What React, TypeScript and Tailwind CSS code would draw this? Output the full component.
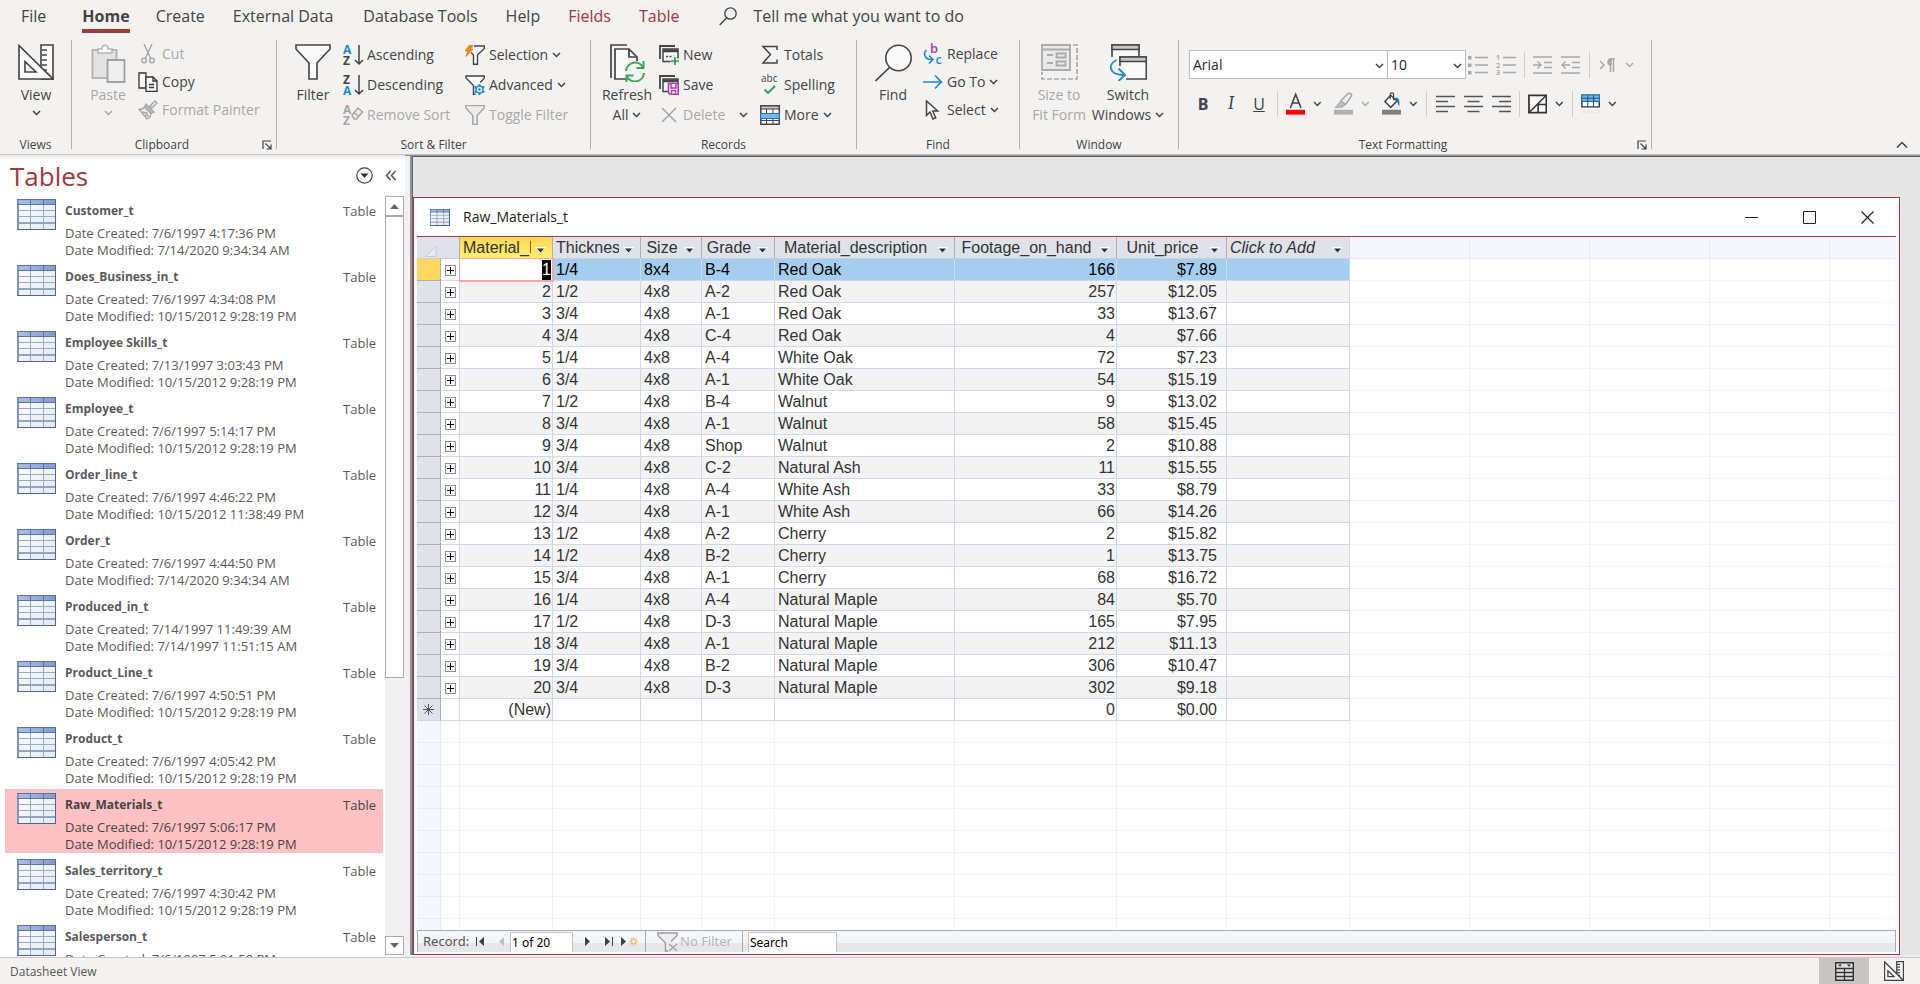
import type { ReactNode } from "react";

type NavItem = { name: string; created: string; modified: string; selected?: boolean };

const NAV_ITEMS: NavItem[] = [
  { name: "Customer_t", created: "7/6/1997 4:17:36 PM", modified: "7/14/2020 9:34:34 AM" },
  { name: "Does_Business_in_t", created: "7/6/1997 4:34:08 PM", modified: "10/15/2012 9:28:19 PM" },
  { name: "Employee Skills_t", created: "7/13/1997 3:03:43 PM", modified: "10/15/2012 9:28:19 PM" },
  { name: "Employee_t", created: "7/6/1997 5:14:17 PM", modified: "10/15/2012 9:28:19 PM" },
  { name: "Order_line_t", created: "7/6/1997 4:46:22 PM", modified: "10/15/2012 11:38:49 PM" },
  { name: "Order_t", created: "7/6/1997 4:44:50 PM", modified: "7/14/2020 9:34:34 AM" },
  { name: "Produced_in_t", created: "7/14/1997 11:49:39 AM", modified: "7/14/1997 11:51:15 AM" },
  { name: "Product_Line_t", created: "7/6/1997 4:50:51 PM", modified: "10/15/2012 9:28:19 PM" },
  { name: "Product_t", created: "7/6/1997 4:05:42 PM", modified: "10/15/2012 9:28:19 PM" },
  { name: "Raw_Materials_t", created: "7/6/1997 5:06:17 PM", modified: "10/15/2012 9:28:19 PM", selected: true },
  { name: "Sales_territory_t", created: "7/6/1997 4:30:42 PM", modified: "10/15/2012 9:28:19 PM" },
  { name: "Salesperson_t", created: "7/6/1997 5:01:58 PM", modified: "10/15/2012 9:28:19 PM" },
];

const MATERIALS: string[][] = [
  ["1", "1/4", "8x4", "B-4", "Red Oak", "166", "$7.89"],
  ["2", "1/2", "4x8", "A-2", "Red Oak", "257", "$12.05"],
  ["3", "3/4", "4x8", "A-1", "Red Oak", "33", "$13.67"],
  ["4", "3/4", "4x8", "C-4", "Red Oak", "4", "$7.66"],
  ["5", "1/4", "4x8", "A-4", "White Oak", "72", "$7.23"],
  ["6", "3/4", "4x8", "A-1", "White Oak", "54", "$15.19"],
  ["7", "1/2", "4x8", "B-4", "Walnut", "9", "$13.02"],
  ["8", "3/4", "4x8", "A-1", "Walnut", "58", "$15.45"],
  ["9", "3/4", "4x8", "Shop", "Walnut", "2", "$10.88"],
  ["10", "3/4", "4x8", "C-2", "Natural Ash", "11", "$15.55"],
  ["11", "1/4", "4x8", "A-4", "White Ash", "33", "$8.79"],
  ["12", "3/4", "4x8", "A-1", "White Ash", "66", "$14.26"],
  ["13", "1/2", "4x8", "A-2", "Cherry", "2", "$15.82"],
  ["14", "1/2", "4x8", "B-2", "Cherry", "1", "$13.75"],
  ["15", "3/4", "4x8", "A-1", "Cherry", "68", "$16.72"],
  ["16", "1/4", "4x8", "A-4", "Natural Maple", "84", "$5.70"],
  ["17", "1/2", "4x8", "D-3", "Natural Maple", "165", "$7.95"],
  ["18", "3/4", "4x8", "A-1", "Natural Maple", "212", "$11.13"],
  ["19", "3/4", "4x8", "B-2", "Natural Maple", "306", "$10.47"],
  ["20", "3/4", "4x8", "D-3", "Natural Maple", "302", "$9.18"],
];

const COLUMNS = ["Material_ID", "Thickness", "Size", "Grade", "Material_description", "Footage_on_hand", "Unit_price"];

const CELL_ALIGN = [
  "text-right pr-px",
  "text-left pl-[3px]",
  "text-left pl-[3px]",
  "text-left pl-[3px]",
  "text-left pl-[3px]",
  "text-right pr-px",
  "text-right pr-[9px]",
];

const INK = "#444444";
const FADED = "#a8a8a8";

/* ---------- Icons ---------- */

function Chevron({ className = "" }: { className?: string }) {
  return (
    <svg width="9" height="6" viewBox="0 0 9 6" className={className} aria-hidden="true">
      <path d="M1 1l3.5 3.5L8 1" fill="none" stroke="currentColor" strokeWidth="1.5" />
    </svg>
  );
}

function DesignIcon({ size }: { size: number }) {
  return (
    <svg width={size} height={size} viewBox="0 0 36 36" aria-hidden="true">
      <g fill="#fafafa" stroke={INK} strokeWidth={size > 30 ? 1.6 : 2.4}>
        <path d="M23 1h12v34H23z" />
        <path d="M1 1.5V35h34z" />
        <path d="M7 17.5V28h11z" />
        <path d="M24 6h5M24 11h5M24 16h5M24 21h5M26 26h3" />
      </g>
    </svg>
  );
}

function PasteIcon() {
  return (
    <svg width="36" height="39" viewBox="0 0 36 39" aria-hidden="true">
      <path d="M2.500 6h24v28h-24z" fill="#e4e3e2" stroke="#b5b5b5" strokeWidth="2" />
      <path d="M8 9V5h4c0-5 6-5 6 0h4v4z" fill="#fafafa" stroke="#b5b5b5" strokeWidth="1.500" />
      <path d="M17.500 16h17v22h-17z" fill="#efefef" stroke="#a0a0a0" strokeWidth="1.800" />
    </svg>
  );
}

function CutIcon() {
  return (
    <svg width="20" height="20" viewBox="0 0 20 20" fill="none" stroke="#a0a0a0" strokeWidth="1.300" aria-hidden="true">
      <path d="M6 0l6.500 14M14 0L7.500 14" />
      <circle cx="6" cy="16.500" r="2.300" />
      <circle cx="14" cy="16.500" r="2.300" />
    </svg>
  );
}

function CopyIcon() {
  return (
    <svg width="20" height="20" viewBox="0 0 20 20" fill="#fafafa" stroke="#333" strokeWidth="1.300" aria-hidden="true">
      <path d="M1 1h7v15H1z" />
      <path d="M8 5h7l4 4v10.300H8z" />
      <path d="M15 5v4h4M11 12.500h5M11 15.500h5" fill="none" />
    </svg>
  );
}

function PainterIcon() {
  return (
    <svg width="20" height="20" viewBox="0 0 20 20" fill="#ececec" stroke="#a5a5a5" strokeWidth="1.300" aria-hidden="true">
      <path d="M12 6l5-5 2 2-5 5z" />
      <path d="M8 4l8 8-3 1.500L6.500 7z" fill="#bdbdbd" />
      <path d="M6.500 7C5 9 3 9.500 1 9.500L9 19c3-1.500 4-3.500 4-5.500z" />
      <path d="M4 12l6 1.500M7 15l4 1" />
    </svg>
  );
}

function Funnel({ size, color = INK, fill = "#fafafa" }: { size: number; color?: string; fill?: string }) {
  return (
    <svg width={size} height={size} viewBox="0 0 36 36" aria-hidden="true">
      <path d="M1 1h34v4L22 19v16h-8V19L1 5z" fill={fill} stroke={color} strokeWidth={size > 30 ? 1.6 : 2.8} />
    </svg>
  );
}

function SortIcon({ top, bottom, topColor, bottomColor }: { top: string; bottom: string; topColor: string; bottomColor: string }) {
  return (
    <svg width="20" height="22" viewBox="0 0 20 22" className="overflow-visible" aria-hidden="true">
      <g fontFamily="Open Sans" fontWeight="700" fontSize="12">
        <text x="0" y="10" fill={topColor}>{top}</text>
        <text x="0" y="21" fill={bottomColor}>{bottom}</text>
      </g>
      <path d="M16 1v19M12 16l4 4 4-4" fill="none" stroke={INK} strokeWidth="1.500" />
    </svg>
  );
}

function RemoveSortIcon() {
  return (
    <svg width="20" height="22" viewBox="0 0 20 22" className="overflow-visible" aria-hidden="true">
      <g fontFamily="Open Sans" fontWeight="700" fontSize="12" fill="#a5a5a5">
        <text x="0" y="10">A</text>
        <text x="0" y="21">Z</text>
      </g>
      <path d="M9 11l6-7 4.500 4-6 7h-2.500z" fill="#ececec" stroke="#a5a5a5" strokeWidth="1.500" />
      <path d="M11 8.500l5 4" stroke="#a5a5a5" strokeWidth="1.500" />
    </svg>
  );
}

function SelectionIcon() {
  return (
    <svg width="20" height="20" viewBox="0 0 20 20" aria-hidden="true">
      <path d="M9 1h10.300v2.500L12.500 10v9.300h-4V10L6 7.500" fill="#fafafa" stroke={INK} strokeWidth="1.400" />
      <path d="M4.500 0L0 6h2.500L1 11.500 8 4H5.500L8 0z" fill="#f08a24" stroke="#d9730d" strokeWidth=".7" />
    </svg>
  );
}

function AdvancedIcon() {
  return (
    <svg width="20" height="20" viewBox="0 0 20 20" aria-hidden="true">
      <path d="M10.500 19.300H8.500V10.500L1 3V1h18.300v2l-4 4.500" fill="#fafafa" stroke={INK} strokeWidth="1.400" />
      <circle cx="14.500" cy="14.500" r="3.600" fill="#dbeefb" stroke="#1e8bcd" strokeWidth="1.500" />
      <circle cx="14.500" cy="14.500" r="1.200" fill="#1e8bcd" />
      <path d="M14.500 9v2M14.500 18v2M9.700 11.700l1.800 1M17.500 16.300l1.800 1M9.700 17.300l1.800-1M17.500 12.700l1.800-1" stroke="#1e8bcd" strokeWidth="1.900" />
    </svg>
  );
}

function RefreshIcon() {
  return (
    <svg width="36" height="38" viewBox="0 0 36 38" fill="none" aria-hidden="true">
      <path d="M18 1H2v33" stroke={INK} strokeWidth="1.700" />
      <path d="M20 35H6V5h14l8 8v4" fill="#fafafa" stroke={INK} strokeWidth="1.700" />
      <path d="M20 5v8h8" stroke={INK} strokeWidth="1.700" />
      <circle cx="26" cy="28" r="10.500" fill="#f3f2f1" />
      <path d="M17 27a9 9 0 0 1 17-3.500M35 29a9 9 0 0 1-17 3.500" stroke="#3fa45b" strokeWidth="2" />
      <path d="M34.500 17v7h-7M17.500 38v-6.500h7" stroke="#3fa45b" strokeWidth="2" />
    </svg>
  );
}

function FormStackIcon({ kind }: { kind: "new" | "save" }) {
  return (
    <svg width="20" height="20" viewBox="0 0 20 20" fill="none" aria-hidden="true">
      <path d="M1 14V1h15" stroke={INK} strokeWidth="1.800" />
      <path d="M4 4h15v12.500H4z" fill="#fafafa" stroke={INK} strokeWidth="1.500" />
      <path d="M4 5.800h15" stroke={INK} strokeWidth="3" />
      {kind === "new" ? (
        <>
          <path d="M7 11.500h2M10.500 11.500h2M14 11.500h2" stroke={INK} strokeWidth="1.300" />
          <path d="M16 11v9M11.500 15.500h9" stroke="#f3f2f1" strokeWidth="4" />
          <path d="M16 12v8M12 16h8" stroke="#2f9e52" strokeWidth="1.700" />
        </>
      ) : (
        <>
          <path d="M9.500 8.500h9.700v10.700h-8.200l-1.500-1.500z" fill="#fafafa" stroke="#a63fb3" strokeWidth="1.600" />
          <path d="M12 9v4h5V9M12.500 19v-3.500h4V19" stroke="#a63fb3" strokeWidth="1.500" />
        </>
      )}
    </svg>
  );
}

function DeleteIcon() {
  return (
    <svg width="20" height="20" viewBox="0 0 20 20" aria-hidden="true">
      <path d="M3 3l14 14M17 3L3 17" stroke="#a5a5a5" strokeWidth="1.500" />
    </svg>
  );
}

function SigmaIcon() {
  return (
    <svg width="20" height="20" viewBox="0 0 20 20" aria-hidden="true">
      <path d="M17 5V1.500H3L10.500 9.500 3 18h14v-3.500" fill="none" stroke={INK} strokeWidth="1.500" />
    </svg>
  );
}

function SpellingIcon() {
  return (
    <svg width="20" height="22" viewBox="0 0 20 22" className="overflow-visible" aria-hidden="true">
      <text x="1" y="8" fontFamily="Open Sans" fontSize="10" fill={INK}>abc</text>
      <path d="M4.500 15.500l3.500 3.500 7-7" fill="none" stroke="#2f9e52" strokeWidth="1.800" />
    </svg>
  );
}

function MoreIcon() {
  return (
    <svg width="20" height="20" viewBox="0 0 20 20" aria-hidden="true">
      <path d="M.8.800h18.400v18.400H.8z" fill="#fafafa" stroke={INK} strokeWidth="1.500" />
      <path d="M1 1h18v3H1z" fill="#c8c6c4" stroke={INK} />
      <path d="M6.500 4v15M13 4v15M1 15.500h18" stroke={INK} />
      <path d="M.5 8.500h19v5H.5z" fill="#77b8ea" stroke="#1976c5" strokeWidth="1.200" />
    </svg>
  );
}

function FindIcon() {
  return (
    <svg width="37" height="38" viewBox="0 0 37 38" aria-hidden="true">
      <circle cx="23.500" cy="14" r="12.700" fill="#fafafa" stroke={INK} strokeWidth="1.600" />
      <path d="M14.500 23.500L.5 37" stroke={INK} strokeWidth="1.700" />
    </svg>
  );
}

function ReplaceIcon() {
  return (
    <svg width="20" height="22" viewBox="0 0 20 22" className="overflow-visible" aria-hidden="true">
      <g fontFamily="Open Sans" fontWeight="600" fontSize="13">
        <text x="7" y="10" fill="#a63fb3">b</text>
        <text x="12.500" y="21" fill="#1e8bcd">c</text>
      </g>
      <path d="M3.500 7C0 10 1 17 9 16.500M6 12.500l4 4-4 4" fill="none" stroke="#1e8bcd" strokeWidth="1.600" />
    </svg>
  );
}

function GoToIcon() {
  return (
    <svg width="20" height="20" viewBox="0 0 20 20" aria-hidden="true">
      <path d="M0 10h18M12 3.500l6.500 6.500-6.500 6.500" fill="none" stroke="#1e8bcd" strokeWidth="1.600" />
    </svg>
  );
}

function PointerIcon() {
  return (
    <svg width="20" height="20" viewBox="0 0 20 20" aria-hidden="true">
      <path d="M3.500 1v14.500l3.500-3.500 3 7 2.700-1.200-3-6.800h5z" fill="#fafafa" stroke={INK} strokeWidth="1.500" />
    </svg>
  );
}

function SizeToFitIcon() {
  return (
    <svg width="37" height="36" viewBox="0 0 37 36" fill="none" stroke="#ababab" aria-hidden="true">
      <path d="M1 1h28v25H1z" fill="#e9e9e9" strokeWidth="1.800" />
      <path d="M1 5.500h28" strokeWidth="2" />
      <path d="M6 11h6M6 19h6" strokeWidth="1.800" />
      <path d="M15.500 9.500h9v4h-9zM15.500 17.500h9v4h-9z" strokeWidth="1.800" />
      <path d="M32 1h4v34H1v-7" strokeWidth="1.700" strokeDasharray="5 2" />
    </svg>
  );
}

function SwitchIcon() {
  return (
    <svg width="38" height="37" viewBox="0 0 38 37" fill="none" aria-hidden="true">
      <path d="M3 13V1h27v11" fill="#fafafa" stroke={INK} strokeWidth="1.600" />
      <path d="M3 1h27v4.500H3z" fill="#c8c6c4" stroke={INK} strokeWidth="1.500" />
      <path d="M11 13h27v22H11z" fill="#fafafa" />
      <path d="M11 22v-9h26.300v22H17" stroke={INK} strokeWidth="1.600" />
      <path d="M11 13h26.300v4.500H11z" fill="#c8c6c4" stroke={INK} strokeWidth="1.500" />
      <path d="M7.500 16C-1 20-1 31 15 31M9.500 24.500l6.500 6.500-6.500 6" stroke="#1e8bcd" strokeWidth="1.900" />
    </svg>
  );
}

function ListIcon({ numbered = false }: { numbered?: boolean }) {
  return (
    <svg width="20" height="20" viewBox="0 0 20 20" className="overflow-visible" aria-hidden="true">
      <path d="M7 2.500h13M7 10h13M7 17.500h13" stroke="#a8a8a8" strokeWidth="1.700" />
      {numbered ? (
        <g fontFamily="Open Sans" fontWeight="700" fontSize="7" fill="#a8a8a8">
          <text x="0" y="5">1</text>
          <text x="0" y="12.500">2</text>
          <text x="0" y="20">3</text>
        </g>
      ) : (
        <path d="M0 1h3.500v3.500H0zM0 8.500h3.500V12H0zM0 16h3.500v3.500H0z" fill="#a8a8a8" />
      )}
    </svg>
  );
}

function IndentIcon({ out = false }: { out?: boolean }) {
  return (
    <svg width="20" height="20" viewBox="0 0 20 20" fill="none" stroke="#a8a8a8" strokeWidth="1.700" aria-hidden="true">
      <path d="M0 2h19M11 7.500h8M11 12.500h8M0 18h19" />
      <path d={out ? "M9 10H1M4.500 6.500L1 10l3.500 3.500" : "M0 10h8M4.500 6.500L8 10l-3.500 3.500"} strokeWidth="1.400" />
    </svg>
  );
}

function AlignIcon({ align }: { align: "left" | "center" | "right" }) {
  const d = {
    left: "M0 2.500h19M0 7.500h12M0 12.500h19M0 17.500h12",
    center: "M0 2.500h19M3.500 7.500h12M0 12.500h19M3.500 17.500h12",
    right: "M0 2.500h19M7 7.500h12M0 12.500h19M7 17.500h12",
  }[align];
  return (
    <svg width="19" height="20" viewBox="0 0 19 20" aria-hidden="true">
      <path d={d} stroke="#555" strokeWidth="1.500" />
    </svg>
  );
}

function FontColorIcon() {
  return (
    <svg width="20" height="24" viewBox="0 0 20 24" aria-hidden="true">
      <path d="M4.500 16L10 2l5.500 14M6.500 11h7" fill="none" stroke={INK} strokeWidth="1.600" />
      <path d="M0 18h20v5H0z" fill="#ff0000" />
    </svg>
  );
}

function HighlightIcon() {
  return (
    <svg width="20" height="24" viewBox="0 0 20 24" aria-hidden="true">
      <path d="M7 9l7-7.500c2-1.500 5 0 4 2.500l-6 8.500z" fill="#ececec" stroke="#a5a5a5" strokeWidth="1.500" />
      <path d="M7 9l5 3.500-3 2.500-8 1z" fill="#bdbdbd" stroke="#a5a5a5" />
      <path d="M0 18h20v5H0z" fill="#b0b0b0" />
    </svg>
  );
}

function FillIcon() {
  return (
    <svg width="20" height="24" viewBox="0 0 20 24" aria-hidden="true">
      <path d="M9 3l6.500 6L9 15.500 3 9.500z" fill="#fafafa" stroke={INK} strokeWidth="1.500" />
      <path d="M8.500 7V2c0-2 3.500-2 3.500 0v6" fill="none" stroke={INK} strokeWidth="1.200" />
      <path d="M14 5c3.500.500 4.500 3 4 9-2-1-1-5-4-6z" fill="#1976c5" />
      <path d="M0 18h20v5H0z" fill="#808080" />
    </svg>
  );
}

function GridlinesIcon() {
  return (
    <svg width="20" height="20" viewBox="0 0 20 20" aria-hidden="true">
      <path d="M1 1h18v18H1z" fill="#fafafa" stroke="#333" strokeWidth="1.800" />
      <path d="M1 19L19 1M10 10.500h9M10.500 10v9" stroke="#333" strokeWidth="1.600" />
    </svg>
  );
}

function AltRowIcon() {
  return (
    <svg width="20" height="20" viewBox="0 0 20 20" aria-hidden="true">
      <path d="M1 1h18v12H1z" fill="#fafafa" stroke="#333" strokeWidth="1.500" />
      <path d="M.7.700h18.600v6.500H.7z" fill="#77b8ea" stroke="#1976c5" strokeWidth="1.200" />
      <path d="M7 1v12M13 1v12M1 4h18" stroke="#1d4e7a" />
      <path d="M0 16h20v4H0z" fill="#ebebeb" />
    </svg>
  );
}

function TableIcon({ large = false }: { large?: boolean }) {
  return (
    <svg width={large ? 39 : 20} height={large ? 31 : 17} viewBox="0 0 39 31" preserveAspectRatio="none" aria-hidden="true" className="shrink-0">
      <defs>
        <linearGradient id="sheet" x1="0" y1="0" x2="1" y2="1">
          <stop offset="0" stopColor="#ffffff" />
          <stop offset="1" stopColor="#dfe8f5" />
        </linearGradient>
        <linearGradient id="sheetHead" x1="0" y1="0" x2="1" y2="0">
          <stop offset="0" stopColor="#b0c0e2" />
          <stop offset="1" stopColor="#8499cc" />
        </linearGradient>
      </defs>
      <path d="M0 0h39v31H0z" fill="url(#sheet)" />
      <path d="M0 0h39v5H0z" fill="url(#sheetHead)" />
      <path d="M1 11.500h38M1 17.500h38M13.500 5v26M26.500 5v26" stroke="#9cabc3" strokeWidth={large ? 1 : 1.8} />
      <path d="M1 24h38" stroke="#93a4bf" strokeWidth="2" />
      <path d="M1 0v31" stroke="#7f96c2" strokeWidth="2" />
      <path d="M0 .500h39M0 5.500h39M13.500 0v5M26.500 0v5" stroke="#5874b3" strokeWidth={large ? 1 : 2} />
      <path d="M38.500 0v31M0 30.500h39" stroke="#4f6790" strokeWidth={large ? 1 : 3} />
    </svg>
  );
}

function LauncherIcon() {
  return (
    <svg width="10" height="10" viewBox="0 0 10 10" fill="none" stroke={INK} strokeWidth="1.200" aria-hidden="true">
      <path d="M1 9V1h8M3.500 3.500l5 5M9 4.500V9H4.500" />
    </svg>
  );
}

/* ---------- Ribbon building blocks ---------- */

function Group({ label, launcher = false, className, children }: { label: string; launcher?: boolean; className: string; children: ReactNode }) {
  return (
    <section aria-label={label} className={`flex h-[109px] shrink-0 flex-col justify-between border-r border-[#b3b1af] ${className}`}>
      <div className="flex items-start">{children}</div>
      <div className="flex h-2 items-center text-xs leading-2">
        <span className="flex-1 text-center">{label}</span>
        {launcher && (
          <button type="button" aria-label={`${label} settings`} className="mr-1 flex w-5 justify-end">
            <LauncherIcon />
          </button>
        )}
      </div>
    </section>
  );
}

function BigButton({ icon, lines, chevron, disabled, className }: { icon: ReactNode; lines: string[]; chevron?: boolean; disabled?: boolean; className: string }) {
  return (
    <button type="button" disabled={disabled} className={`flex flex-col items-center pt-1 leading-5 ${disabled ? "text-[#a8a8a8]" : ""} ${className}`}>
      <span className="flex h-9 items-start">{icon}</span>
      <span className="mt-[5px] h-5">{lines[0]}</span>
      <span className={`flex items-center gap-1 whitespace-nowrap ${lines[1] ? "h-5" : "h-4"}`}>
        {lines[1]}
        {chevron && <Chevron />}
      </span>
    </button>
  );
}

function SmallButton({ icon, label, chevron, disabled, tall }: { icon: ReactNode; label: string; chevron?: boolean; disabled?: boolean; tall?: boolean }) {
  return (
    <button type="button" disabled={disabled} className={`flex items-center whitespace-nowrap ${tall ? "h-[30px]" : "h-7"} ${disabled ? "text-[#a8a8a8]" : ""}`}>
      <span className="mr-1 flex w-5 justify-center">{icon}</span>
      {label}
      {chevron && <Chevron className="ml-1" />}
    </button>
  );
}

function ToolButton({ label, disabled, className = "w-5", children }: { label: string; disabled?: boolean; className?: string; children: ReactNode }) {
  return (
    <button type="button" aria-label={label} disabled={disabled} className={`flex h-6 shrink-0 items-center justify-center ${disabled ? "text-[#a8a8a8]" : ""} ${className}`}>
      {children}
    </button>
  );
}

function Divider() {
  return <span className="h-[26px] w-px shrink-0 bg-[#d0cecc]" />;
}

function Combo({ label, value, className }: { label: string; value: string; className: string }) {
  return (
    <label className={`relative flex h-[29px] border border-[#c0bebc] bg-white ${className}`}>
      <span className="sr-only">{label}</span>
      <select defaultValue={value} className="w-full appearance-none bg-transparent pl-[3px] text-sm text-[#262626]">
        <option>{value}</option>
      </select>
      <Chevron className="pointer-events-none absolute top-3 right-[3px]" />
    </label>
  );
}

function Tabs() {
  const tab = "flex h-[33px] flex-col items-center justify-between whitespace-nowrap";
  return (
    <nav aria-label="Ribbon tabs" className="flex h-[33px] items-start pl-[21px] text-base leading-8">
      <a href="#file" className={`${tab} mr-9`}>File</a>
      <a href="#home" aria-current="page" className={`${tab} mr-[26px] border-b-4 border-[#a4373a] font-bold`}>Home</a>
      <a href="#create" className={`${tab} mr-7`}>Create</a>
      <a href="#external" className={`${tab} mr-[30px]`}>External Data</a>
      <a href="#tools" className={`${tab} mr-7`}>Database Tools</a>
      <a href="#help" className={`${tab} mr-7`}>Help</a>
      <a href="#fields" className={`${tab} mr-7 text-[#a4373a]`}>Fields</a>
      <a href="#table" className={`${tab} mr-10 text-[#a4373a]`}>Table</a>
      <button type="button" className="flex items-center gap-4 whitespace-nowrap">
        <svg width="18" height="19" viewBox="0 0 18 19" fill="none" stroke={INK} strokeWidth="1.300" aria-hidden="true">
          <circle cx="11.500" cy="6.500" r="5.700" />
          <path d="M7.500 11L.7 18" />
        </svg>
        Tell me what you want to do
      </button>
    </nav>
  );
}

function Ribbon() {
  return (
    <header className="relative border-b border-[#c8c6c4] bg-[#f3f2f1] text-[#444]">
      <Tabs />
      <div className="flex pt-[7px] pb-[5px] text-sm">
        <Group label="Views" className="w-[72px]">
          <BigButton className="ml-[18px] w-9" icon={<DesignIcon size={36} />} lines={["View"]} chevron />
        </Group>

        <Group label="Clipboard" launcher className="w-[205px]">
          <BigButton className="ml-4 w-10" icon={<PasteIcon />} lines={["Paste"]} chevron disabled />
          <div className="ml-2.5 flex flex-col">
            <SmallButton icon={<CutIcon />} label="Cut" disabled />
            <SmallButton icon={<CopyIcon />} label="Copy" />
            <SmallButton icon={<PainterIcon />} label="Format Painter" disabled />
          </div>
        </Group>

        <Group label="Sort & Filter" className="w-[314px]">
          <BigButton className="ml-[18px] w-9" icon={<Funnel size={36} />} lines={["Filter"]} />
          <div className="ml-3 flex w-[122px] flex-col">
            <SmallButton tall icon={<SortIcon top="A" bottom="Z" topColor="#1e8bcd" bottomColor={INK} />} label="Ascending" />
            <SmallButton tall icon={<SortIcon top="Z" bottom="A" topColor={INK} bottomColor="#1e8bcd" />} label="Descending" />
            <SmallButton tall icon={<RemoveSortIcon />} label="Remove Sort" disabled />
          </div>
          <div className="flex flex-col">
            <SmallButton tall icon={<SelectionIcon />} label="Selection" chevron />
            <SmallButton tall icon={<AdvancedIcon />} label="Advanced" chevron />
            <SmallButton tall icon={<Funnel size={20} color={FADED} fill="#ececec" />} label="Toggle Filter" disabled />
          </div>
        </Group>

        <Group label="Records" className="w-[266px]">
          <BigButton className="ml-3 w-12" icon={<RefreshIcon />} lines={["Refresh", "All"]} chevron />
          <div className="ml-2 flex w-[101px] flex-col">
            <SmallButton tall icon={<FormStackIcon kind="new" />} label="New" />
            <SmallButton tall icon={<FormStackIcon kind="save" />} label="Save" />
            <div className="flex items-center">
              <SmallButton tall icon={<DeleteIcon />} label="Delete" disabled />
              <button type="button" aria-label="Delete options" className="ml-3.5">
                <Chevron />
              </button>
            </div>
          </div>
          <div className="flex flex-col">
            <SmallButton tall icon={<SigmaIcon />} label="Totals" />
            <SmallButton tall icon={<SpellingIcon />} label="Spelling" />
            <SmallButton tall icon={<MoreIcon />} label="More" chevron />
          </div>
        </Group>

        <Group label="Find" className="w-[163px]">
          <BigButton className="ml-[18px] w-9" icon={<FindIcon />} lines={["Find"]} />
          <div className="ml-3 flex flex-col">
            <SmallButton icon={<ReplaceIcon />} label="Replace" />
            <SmallButton icon={<GoToIcon />} label="Go To" chevron />
            <SmallButton icon={<PointerIcon />} label="Select" chevron />
          </div>
        </Group>

        <Group label="Window" className="w-[159px]">
          <BigButton className="ml-2.5 w-[58px]" icon={<SizeToFitIcon />} lines={["Size to", "Fit Form"]} disabled />
          <BigButton className="w-[80px]" icon={<SwitchIcon />} lines={["Switch", "Windows"]} chevron />
        </Group>

        <Group label="Text Formatting" launcher className="w-[473px]">
          <div className="flex flex-col pt-2.5 pl-2.5">
            <div className="flex items-center">
              <Combo label="Font" value="Arial" className="w-[199px]" />
              <Combo label="Font size" value="10" className="w-[78px] border-l-0" />
              <div className="flex items-center gap-2 pl-0.5">
                <ToolButton label="Bullets" disabled><ListIcon /></ToolButton>
                <ToolButton label="Numbering" disabled><ListIcon numbered /></ToolButton>
                <Divider />
                <ToolButton label="Increase indent" disabled><IndentIcon /></ToolButton>
                <ToolButton label="Decrease indent" disabled><IndentIcon out /></ToolButton>
                <Divider />
                <ToolButton label="Text direction" disabled className="w-9 gap-2.5">
                  <svg width="16" height="14" viewBox="0 0 16 14" fill="none" stroke="#a8a8a8" strokeWidth="1.500" aria-hidden="true">
                    <path d="M1 3l4 4-4 4M16 1h-6M11.500 1v13M14.500 1v13" />
                    <path d="M12 1a3 3 0 0 0 0 6z" fill="#a8a8a8" />
                  </svg>
                  <Chevron />
                </ToolButton>
              </div>
            </div>
            <div className="mt-[11px] flex h-7 items-center gap-2">
              <ToolButton label="Bold" className="ml-1 w-5"><span className="text-base font-bold">B</span></ToolButton>
              <ToolButton label="Italic"><span className="font-serif text-lg italic">I</span></ToolButton>
              <ToolButton label="Underline"><span className="text-base underline">U</span></ToolButton>
              <Divider />
              <ToolButton label="Font color" className="w-9 gap-2"><FontColorIcon /><Chevron /></ToolButton>
              <ToolButton label="Highlight" disabled className="ml-1 w-9 gap-2"><HighlightIcon /><Chevron /></ToolButton>
              <ToolButton label="Fill color" className="ml-1 w-9 gap-2"><FillIcon /><Chevron /></ToolButton>
              <Divider />
              <ToolButton label="Align left"><AlignIcon align="left" /></ToolButton>
              <ToolButton label="Center"><AlignIcon align="center" /></ToolButton>
              <ToolButton label="Align right"><AlignIcon align="right" /></ToolButton>
              <Divider />
              <ToolButton label="Gridlines" className="w-9 gap-2"><GridlinesIcon /><Chevron /></ToolButton>
              <Divider />
              <ToolButton label="Alternate row color" className="w-9 gap-2"><AltRowIcon /><Chevron /></ToolButton>
            </div>
          </div>
        </Group>
        <button type="button" aria-label="Collapse the ribbon" className="mr-3 ml-auto self-end">
          <svg width="12" height="8" viewBox="0 0 12 8" aria-hidden="true">
            <path d="M1 6.500l5-5 5 5" fill="none" stroke={INK} strokeWidth="1.500" />
          </svg>
        </button>
      </div>
    </header>
  );
}

/* ---------- Navigation pane ---------- */

function NavPane() {
  return (
    <aside className="flex w-[405px] shrink-0 flex-col bg-white text-[#5a5a5a]">
      <div className="flex h-10 shrink-0 items-center bg-linear-to-b from-[#ebebeb] to-white to-15% pr-2 pl-2.5">
        <h1 className="flex-1 pt-0.5 text-[26px] leading-10 text-[#a4373a]">Tables</h1>
        <button type="button" aria-label="Navigation options" className="mr-3">
          <svg width="17" height="17" viewBox="0 0 17 17" aria-hidden="true">
            <circle cx="8.500" cy="8.500" r="7.700" fill="none" stroke={INK} strokeWidth="1.200" />
            <path d="M4.500 6.500h8l-4 4.500z" fill="#333" />
          </svg>
        </button>
        <button type="button" aria-label="Collapse pane">
          <svg width="12" height="11" viewBox="0 0 12 11" fill="none" stroke="#555" strokeWidth="1.500" aria-hidden="true">
            <path d="M5.500 1L1.500 5.500l4 4.500M10.500 1l-4 4.500 4 4.500" />
          </svg>
        </button>
      </div>
      <div className="flex min-h-0 flex-1">
        <ul className="min-w-0 flex-1 overflow-hidden pr-0.5 pl-[5px]">
          {NAV_ITEMS.map((item) => (
            <li key={item.name} className="h-[66px]">
              <a href={`#${item.name}`} className={`flex h-16 gap-[9px] pt-1 pr-[7px] pl-3 ${item.selected ? "bg-[#fdc1c3] text-[#484445]" : ""}`}>
                <TableIcon large />
                <span className="flex min-w-0 flex-1 flex-col whitespace-nowrap">
                  <span className="flex h-[29px] justify-between text-[13px] leading-6">
                    <span className="text-xs leading-6 font-bold">{item.name}</span>
                    <span>Table</span>
                  </span>
                  <span className="text-[13px] leading-[17px]">Date Created: {item.created}</span>
                  <span className="text-[13px] leading-[17px]">Date Modified: {item.modified}</span>
                </span>
              </a>
            </li>
          ))}
        </ul>
        <div className="mt-px mb-0.5 flex w-5 flex-col bg-[#f1f1f1]">
          <button type="button" aria-label="Scroll up" className="flex h-[19px] w-[19px] items-center justify-center border border-b-0 border-[#ababab] bg-white">
            <svg width="9" height="5" viewBox="0 0 9 5" aria-hidden="true"><path d="M0 5l4.500-5L9 5z" fill="#666" /></svg>
          </button>
          <div className="h-[463px] w-[19px] border border-t-2 border-[#ababab] bg-white" />
          <button type="button" aria-label="Scroll down" className="mt-auto flex h-[19px] w-[19px] items-center justify-center border border-[#ababab] bg-white">
            <svg width="9" height="5" viewBox="0 0 9 5" aria-hidden="true"><path d="M0 0l4.500 5L9 0z" fill="#666" /></svg>
          </button>
        </div>
      </div>
    </aside>
  );
}

/* ---------- Datasheet ---------- */

function HeaderArrow() {
  return (
    <svg width="11" height="6" viewBox="0 0 11 6" className="shrink-0" aria-hidden="true">
      <path d="M0 0h11L5.500 6z" fill="#fff" />
      <path d="M2 1.500h7L5.500 5.500z" fill="#2b2f38" />
    </svg>
  );
}

function HeaderCell({ label, active, italic }: { label: string; active?: boolean; italic?: boolean }) {
  return (
    <th
      scope="col"
      className={`h-[22px] border-r border-b border-b-[#ccd0da] p-0 font-normal ${italic ? "border-r-[#d0d7e5] text-left italic" : "border-r-[#abafb8] text-center"} ${
        active ? "bg-linear-to-b from-[#ffd556] to-[#fff06e]" : "bg-[#dfe2e8]"
      }`}
    >
      <div className="flex h-[21px] items-center px-[3px] leading-[21px]">
        <span className="min-w-0 flex-1 overflow-hidden whitespace-nowrap">{label}</span>
        <button type="button" aria-label={`${label} options`} className="mt-1 flex w-[18px] shrink-0 pl-1">
          <HeaderArrow />
        </button>
      </div>
    </th>
  );
}

const EMPTY = "border-r border-b border-[#f1f2f8]";

function SpareCells() {
  return (
    <>
      {[0, 1, 2, 3].map((n) => (
        <td key={n} className={EMPTY} />
      ))}
      <td className="border-b border-[#f1f2f8]" />
    </>
  );
}

function Datasheet() {
  return (
    <table className="w-full table-fixed border-separate border-spacing-0 font-['Liberation_Sans',Arial,sans-serif] text-base leading-5 text-[#333]">
      <colgroup>
        <col className="w-6" />
        <col className="w-[19px]" />
        <col className="w-[93px]" />
        <col className="w-[88px]" />
        <col className="w-[61px]" />
        <col className="w-[73px]" />
        <col className="w-[180px]" />
        <col className="w-[162px]" />
        <col className="w-[110px]" />
        <col className="w-[123px]" />
        <col className="w-[120px]" />
        <col className="w-[120px]" />
        <col className="w-[120px]" />
        <col className="w-[120px]" />
        <col />
      </colgroup>
      <thead>
        <tr className="h-[22px]">
          <td className="border-b border-b-[#ccd0da] bg-[#dfe2e8] p-0">
            <svg width="20" height="20" viewBox="0 0 20 20" aria-hidden="true">
              <path d="M19 8v10.500H8.500z" fill="#e9ebf1" stroke="#c6cbd8" />
            </svg>
          </td>
          <td className="border-r border-b border-r-[#abafb8] border-b-[#ccd0da] bg-[#dfe2e8]" />
          {COLUMNS.map((label, i) => (
            <HeaderCell key={label} label={label} active={i === 0} />
          ))}
          <HeaderCell label="Click to Add" italic />
          {[0, 1, 2, 3].map((n) => (
            <td key={n} className="border-r border-b border-[#e9ebf4] bg-[#f6f7fe]" />
          ))}
          <td className="border-b border-[#e9ebf4] bg-[#f6f7fe]" />
        </tr>
      </thead>
      <tbody>
        {MATERIALS.map((row, r) => {
          const current = r === 0;
          const tint = current ? "bg-[#a4cef0] text-black" : r % 2 === 1 ? "bg-[#f3f3f3]" : "bg-white";
          return (
            <tr key={row[0]} className="h-[22px]">
              <td className={`border-r border-b border-[#abafb8] ${current ? "bg-[#ffd85f]" : "bg-[#dfe2e8]"}`} />
              <td className="border-r border-b border-[#d0d7e5] p-0 pt-px">
                <button type="button" aria-label={`Expand record ${row[0]}`} className="mx-auto flex h-[11px] w-[11px] items-center justify-center border border-[#8f8f8f] bg-white">
                  <svg width="7" height="7" viewBox="0 0 7 7" aria-hidden="true"><path d="M3.500 0v7M0 3.500h7" stroke="#000" shapeRendering="crispEdges" /></svg>
                </button>
              </td>
              {row.map((value, c) =>
                current && c === 0 ? (
                  <td key={c} className="border-r border-b border-[#f7a6aa] bg-white p-0 pt-px text-right outline outline-[#f7a6aa]">
                    <span className="mr-px inline-block bg-black text-white">{value}</span>
                  </td>
                ) : (
                  <td key={c} className={`border-r border-b border-[#d0d7e5] p-0 pt-px ${tint} ${CELL_ALIGN[c]}`}>{value}</td>
                ),
              )}
              <td className={`border-r border-b border-[#d0d7e5] ${tint}`} />
              <SpareCells />
            </tr>
          );
        })}
        <tr className="h-[22px]">
          <td className="border-r border-b border-r-[#abafb8] border-b-[#d0d7e5] bg-[#dfe2e8] p-0">
            <svg width="11" height="11" viewBox="0 0 11 11" className="mx-auto" aria-hidden="true">
              <path d="M5.500 0v11M0 5.500h11M1.500 1.500l8 8M9.500 1.500l-8 8" stroke="#555" />
            </svg>
          </td>
          <td className="border-r border-b border-[#d0d7e5]" />
          {["(New)", "", "", "", "", "0", "$0.00"].map((value, c) => (
            <td key={c} className={`border-r border-b border-[#d0d7e5] p-0 pt-px ${CELL_ALIGN[c]}`}>{value}</td>
          ))}
          <td className="border-r border-b border-[#d0d7e5]" />
          <SpareCells />
        </tr>
        {Array.from({ length: 10 }, (_, r) => (
          <tr key={r} className="h-[22px]">
            <td className="border-r border-b border-[#e9ebf4] bg-[#f6f7fe]" />
            {Array.from({ length: 9 }, (_, c) => (
              <td key={c} className={EMPTY} />
            ))}
            <SpareCells />
          </tr>
        ))}
      </tbody>
    </table>
  );
}

function RecordBar() {
  const arrow = "flex h-5 items-center justify-center";
  return (
    <div className="flex h-[22px] shrink-0 items-stretch border border-b-0 border-[#a7abb6] bg-linear-to-b from-[#f4f5f8] from-55% to-[#e6e7eb] to-55% font-['Noto_Sans',sans-serif] text-[13px] leading-[21px] text-[#555]">
      <span className="w-[50px] pl-[5px]">Record:</span>
      <button type="button" aria-label="First record" className={`${arrow} w-6`}>
        <svg width="8" height="9" viewBox="0 0 8 9" fill="#3b3f48" aria-hidden="true"><path d="M0 0h1v9H0zM8 0v9L3 4.500z" /></svg>
      </button>
      <button type="button" aria-label="Previous record" disabled className={`${arrow} w-[18px]`}>
        <svg width="5" height="9" viewBox="0 0 5 9" fill="#bcbfc6" aria-hidden="true"><path d="M5 0v9L0 4.500z" /></svg>
      </button>
      <input aria-label="Current record" defaultValue="1 of 20" className="mt-px w-[63px] border border-b-0 border-[#c6c6c6] bg-white pl-px text-xs text-black" />
      <button type="button" aria-label="Next record" className={`${arrow} w-7`}>
        <svg width="5" height="9" viewBox="0 0 5 9" fill="#3b3f48" aria-hidden="true"><path d="M0 0v9l5-4.500z" /></svg>
      </button>
      <button type="button" aria-label="Last record" className={`${arrow} w-4`}>
        <svg width="8" height="9" viewBox="0 0 8 9" fill="#3b3f48" aria-hidden="true"><path d="M7 0h1v9H7zM0 0v9l5-4.500z" /></svg>
      </button>
      <button type="button" aria-label="New record" className={`${arrow} mr-1 w-6`}>
        <svg width="17" height="9" viewBox="0 0 17 9" aria-hidden="true">
          <path d="M0 0v9l5-4.500z" fill="#3b3f48" />
          <path d="M12.500 0v9M8 4.500h9M9.500 1.500l6 6M15.500 1.500l-6 6" stroke="#e6bf82" strokeWidth="1.300" />
          <circle cx="12.500" cy="4.500" r="1.200" fill="#fff" />
        </svg>
      </button>
      <span className="w-px bg-[#a7abb6]" />
      <span className="ml-[11px] flex w-[85px] items-center gap-0.5 whitespace-nowrap text-[#b5b5b5]">
        <svg width="21" height="20" viewBox="0 0 21 20" fill="none" className="shrink-0" aria-hidden="true">
          <path d="M14 9.500l6-6V1H1v2.500L8.500 11v8H11" stroke="#9a9a9a" strokeWidth="1.400" fill="#ededed" />
          <path d="M12 12l8 7M20 12l-8 7" stroke="#a5a5a5" strokeWidth="1.400" />
        </svg>
        No Filter
      </span>
      <span className="w-px bg-[#a7abb6]" />
      <input aria-label="Search" defaultValue="Search" className="mt-px ml-[5px] w-[89px] border border-b-0 border-[#c6c6c6] bg-white pl-px text-xs text-black" />
    </div>
  );
}

function DocumentWindow() {
  const control = "flex w-[58px] items-center justify-center";
  return (
    <section aria-label="Raw_Materials_t" className="flex min-h-0 flex-1 flex-col border border-[#a4373a] bg-white px-[3px] pb-0.5">
      <div className="flex h-[39px] shrink-0 items-stretch border-b border-[#a4373a] pl-[13px]">
        <div className="flex flex-1 items-center gap-[13px] text-sm text-[#222]">
          <TableIcon />
          Raw_Materials_t
        </div>
        <button type="button" aria-label="Minimize" className={control}>
          <svg width="13" height="13" viewBox="0 0 13 13" aria-hidden="true"><path d="M0 6.500h13" stroke="#222" /></svg>
        </button>
        <button type="button" aria-label="Maximize" className={control}>
          <svg width="13" height="13" viewBox="0 0 13 13" aria-hidden="true"><path d="M.5.500h12v12H.5z" fill="none" stroke="#222" /></svg>
        </button>
        <button type="button" aria-label="Close" className={control}>
          <svg width="13" height="13" viewBox="0 0 13 13" aria-hidden="true"><path d="M.5.500l12 12M12.500.500l-12 12" stroke="#222" strokeWidth="1.200" /></svg>
        </button>
      </div>
      <div className="min-h-0 flex-1 overflow-hidden">
        <Datasheet />
      </div>
      <RecordBar />
    </section>
  );
}

function StatusBar() {
  return (
    <footer className="flex h-[27px] shrink-0 items-stretch border-t border-[#c6c6c6] bg-[#f3f2f1] pl-2.5 text-xs text-[#555]">
      <span className="flex-1 pt-px leading-[26px]">Datasheet View</span>
      <button type="button" aria-label="Datasheet view" aria-pressed="true" className="flex w-[50px] items-center justify-center bg-[#c8c6c4]">
        <svg width="19" height="19" viewBox="0 0 19 19" aria-hidden="true">
          <path d="M.7.700h17.600v17.600H.7z" fill="#e1dfdd" stroke="#333" strokeWidth="1.400" />
          <path d="M1 6.500h17M1 10.500h17M1 14.500h17M9.500 6.500v12" stroke="#333" strokeWidth="1.300" />
          <path d="M3 2.500h4L5 4.800zM12 2.500h4l-2 2.300z" fill="#333" />
        </svg>
      </button>
      <button type="button" aria-label="Design view" className="mr-px flex w-[50px] items-center justify-center">
        <DesignIcon size={20} />
      </button>
    </footer>
  );
}

export default function App() {
  return (
    <div className="flex h-screen flex-col overflow-hidden bg-[#f3f2f1] font-['Open_Sans','Noto_Sans',sans-serif] text-sm">
      <Ribbon />
      <div className="flex min-h-0 flex-1">
        <NavPane />
        <main className="flex min-w-0 flex-1 border-t border-[#8c908f] bg-[#f0f0f4] pb-0.5 pl-[5px]">
          <div className="flex min-w-0 flex-1 border-l-2 border-[#8b929b]">
            <div className="flex min-w-0 flex-1 flex-col border-t border-l border-[#646464] bg-[#e6e6e6] pt-10 pr-5">
              <DocumentWindow />
            </div>
          </div>
        </main>
      </div>
      <StatusBar />
    </div>
  );
}
